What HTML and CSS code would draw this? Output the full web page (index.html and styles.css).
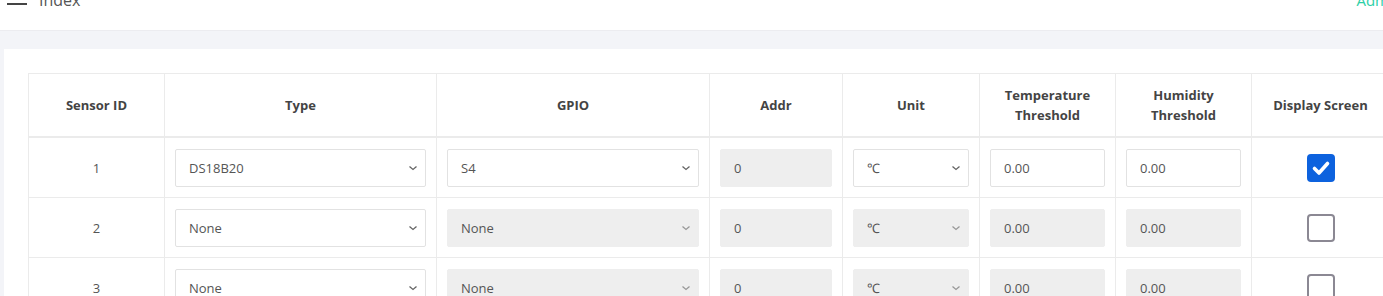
FILE: index.html
```html
<!DOCTYPE html>
<html>
<head>
<meta charset="utf-8">
<link rel="stylesheet" href="styles.css">
</head>
<body>
<header class="topbar">
  <div class="brand">
    <svg class="burger" width="20" height="18" viewBox="0 0 20 18"><path d="M0 1H20M0 7H20M0 13H20" stroke="#444" stroke-width="2"/></svg>
    <span class="title">Index</span>
  </div>
  <span class="user">Admin</span>
</header>
<main class="main">
  <section class="panel">
    <table class="grid">
      <colgroup>
        <col class="c-id"><col class="c-type"><col class="c-gpio"><col class="c-addr"><col class="c-unit"><col class="c-temp"><col class="c-hum"><col class="c-disp">
      </colgroup>
      <thead>
        <tr>
          <th>Sensor ID</th><th>Type</th><th>GPIO</th><th>Addr</th><th>Unit</th><th>Temperature<br>Threshold</th><th>Humidity<br>Threshold</th><th>Display Screen</th>
        </tr>
      </thead>
      <tbody>
        <tr>
          <td>1</td>
          <td><select class="field"><option>DS18B20</option></select></td>
          <td><select class="field"><option>S4</option></select></td>
          <td><input class="field" value="0" disabled></td>
          <td><select class="field"><option>℃</option></select></td>
          <td><input class="field" value="0.00"></td>
          <td><input class="field" value="0.00"></td>
          <td><span class="check on"><svg width="28" height="28" viewBox="0 0 28 28"><path d="M7.5 14.5L12 19L20.5 9.5" fill="none" stroke="#fff" stroke-width="3.6" stroke-linecap="round" stroke-linejoin="round"/></svg></span></td>
        </tr>
        <tr>
          <td>2</td>
          <td><select class="field"><option>None</option></select></td>
          <td><select class="field" disabled><option>None</option></select></td>
          <td><input class="field" value="0" disabled></td>
          <td><select class="field" disabled><option>℃</option></select></td>
          <td><input class="field" value="0.00" disabled></td>
          <td><input class="field" value="0.00" disabled></td>
          <td><span class="check"></span></td>
        </tr>
        <tr>
          <td>3</td>
          <td><select class="field"><option>None</option></select></td>
          <td><select class="field" disabled><option>None</option></select></td>
          <td><input class="field" value="0" disabled></td>
          <td><select class="field" disabled><option>℃</option></select></td>
          <td><input class="field" value="0.00" disabled></td>
          <td><input class="field" value="0.00" disabled></td>
          <td><span class="check"></span></td>
        </tr>
      </tbody>
    </table>
  </section>
</main>
</body>
</html>
```

FILE: styles.css
```css
html, body {
  margin: 0;
  padding: 0;
  overflow: hidden;
  background: #f3f4f8;
  font-family: "Open Sans", "Liberation Sans", sans-serif;
}

.topbar {
  height: 61px;
  margin-top: -30px;
  background: #fff;
  border-bottom: 1px solid #ececf0;
  display: flex;
  align-items: center;
  justify-content: space-between;
  padding-left: 7px;
  box-sizing: border-box;
}

.brand {
  display: flex;
  align-items: center;
  gap: 12px;
}

.burger { display: block; }

.title {
  font-size: 16px;
  color: #555;
}

.user {
  font-size: 15px;
  color: #2ccfa6;
  margin-right: -19px;
}

.main {
  padding: 18px 0 0 4px;
}

.panel {
  background: #fff;
  padding: 24px;
  width: 1500px;
  min-height: 400px;
}

.grid {
  border-collapse: collapse;
  table-layout: fixed;
  width: 1361px;
  font-size: 13px;
  color: #555;
}

.c-id { width: 136px; }
.c-type { width: 272px; }
.c-gpio { width: 273px; }
.c-addr { width: 133px; }
.c-unit { width: 137px; }
.c-temp { width: 136px; }
.c-hum { width: 136px; }
.c-disp { width: 138px; }

.grid th, .grid td {
  border: 1px solid #ebebeb;
  text-align: center;
  vertical-align: middle;
}

.grid th {
  font-weight: 700;
  color: #444;
  line-height: 20px;
  padding: 11px 10px;
  height: 40px;
  border-bottom: 2px solid #ebebeb;
}

.grid td {
  padding: 11px 10px 10px;
  height: 38px;
}

.field {
  display: block;
  width: 100%;
  height: 38px;
  box-sizing: border-box;
  border: 1px solid #e2e2e2;
  border-radius: 2px;
  background-color: #fff;
  color: #555;
  font-family: inherit;
  font-size: 13px;
  padding: 0 8px 0 13px;
  margin: 0;
  outline: none;
  opacity: 1;
}

select.field {
  appearance: none;
  -webkit-appearance: none;
  padding-left: 13px;
  background-image: url("data:image/svg+xml,%3Csvg xmlns='http://www.w3.org/2000/svg' width='10' height='6' viewBox='0 0 10 6'%3E%3Cpath d='M1.5 1.5L5 4.5L8.5 1.5' fill='none' stroke='%23666' stroke-width='1.3'/%3E%3C/svg%3E");
  background-repeat: no-repeat;
  background-position: right 7px center;
}

.field:disabled {
  background-color: #eeeeee;
  border-color: #eeeeee;
  color: #555;
  opacity: 1;
}

select.field:disabled {
  background-image: url("data:image/svg+xml,%3Csvg xmlns='http://www.w3.org/2000/svg' width='10' height='6' viewBox='0 0 10 6'%3E%3Cpath d='M1.5 1.5L5 4.5L8.5 1.5' fill='none' stroke='%23999' stroke-width='1.3'/%3E%3C/svg%3E");
}

.check {
  display: block;
  width: 28px;
  height: 28px;
  margin: 0 auto;
  box-sizing: border-box;
  border: 2px solid #8b8893;
  border-radius: 4px;
  background: #fff;
}

.check.on {
  background: #0d62de;
  border-color: #0d62de;
}

.check.on svg {
  display: block;
  margin: -2px;
}
```
